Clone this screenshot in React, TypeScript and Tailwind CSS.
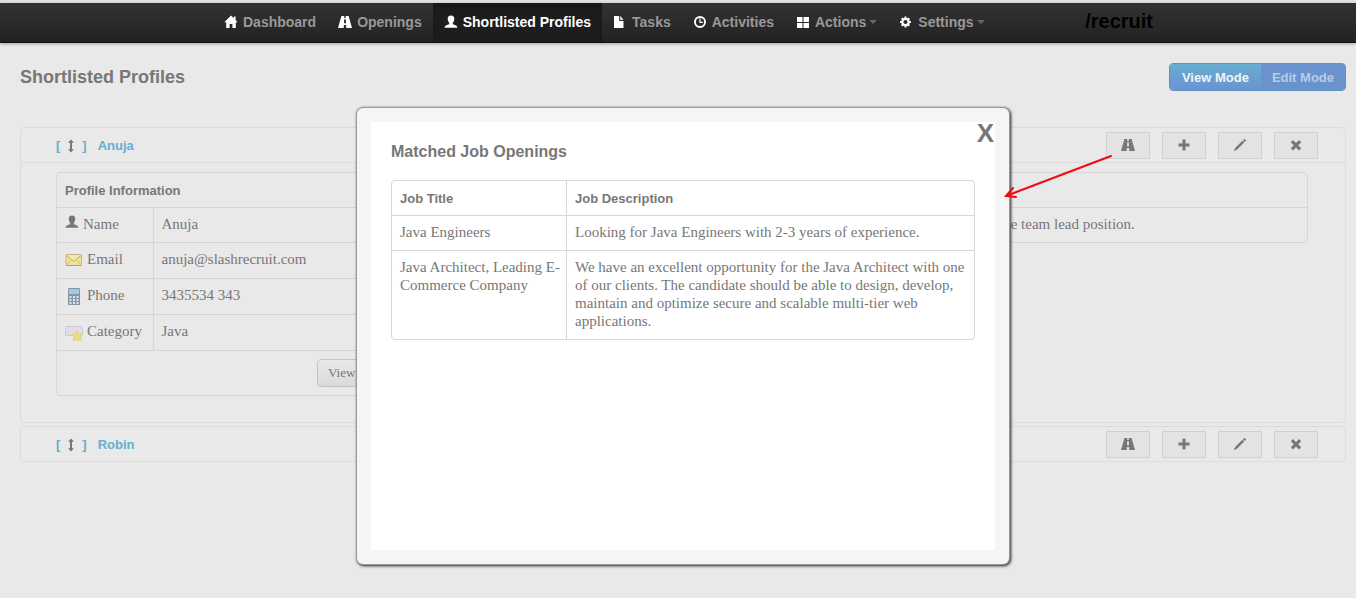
import type { ReactNode } from 'react';

interface IconProps {
  className?: string;
}

function Glyph({ children, className = '' }: IconProps & { children: ReactNode }) {
  return (
    <svg viewBox="0 0 14 14" className={`h-3.5 w-3.5 shrink-0 ${className}`} fill="currentColor" aria-hidden="true">
      {children}
    </svg>
  );
}

const HomeIcon = () => (
  <Glyph><path d="M7 .5 L.3 7.2 H2.2 V13 H5.6 V9 H8.4 V13 H11.8 V7.2 H13.7 L11.6 5.1 V1.6 H9.8 V3.3 Z" /></Glyph>
);
const RoadIcon = () => (
  <Glyph>
    <path fillRule="evenodd" d="M3.4 1 H6.3 L6.2 3 H7.8 L7.7 1 H10.6 L14 13 H8.3 L8.1 10 H5.9 L5.7 13 H0 Z M6.2 4.2 L6 8.2 H8 L7.8 4.2 Z" />
  </Glyph>
);
const UserIcon = () => (
  <Glyph>
    <path d="M7 .6 C9.3 .6 10.4 2 10.3 4 C10.2 6 9.5 7 8.8 7.8 V9 C8.8 9.6 13.4 9.8 13.4 12.8 H.6 C.6 9.8 5.2 9.6 5.2 9 V7.8 C4.5 7 3.8 6 3.7 4 C3.6 2 4.7 .6 7 .6 Z" />
  </Glyph>
);
const FileIcon = () => (
  <Glyph><path d="M1 1 H6.2 V6 H10.5 V13 H1 Z M7.2 1 L10.5 4.8 H7.2 Z" /></Glyph>
);
const ClockIcon = () => (
  <Glyph>
    <path fillRule="evenodd" d="M7 1 A6 6 0 1 1 7 13 A6 6 0 1 1 7 1 Z M7 2.9 A4.1 4.1 0 1 0 7 11.1 A4.1 4.1 0 1 0 7 2.9 Z" />
    <path d="M6.4 3.6 H7.6 V6.8 H10 V8 H6.4 Z" />
  </Glyph>
);
const GridIcon = () => (
  <Glyph><path d="M1 2 H6.5 V7 H1 Z M7.5 2 H13 V7 H7.5 Z M1 8 H6.5 V13 H1 Z M7.5 8 H13 V13 H7.5 Z" /></Glyph>
);
const CogIcon = () => (
  <Glyph>
    <circle cx="6.5" cy="7" r="3.2" fill="none" stroke="currentColor" strokeWidth="2.2" />
    <g stroke="currentColor" strokeWidth="2">
      <path d="M6.5 1.6 V3.4 M6.5 10.6 V12.4 M1.1 7 H2.9 M10.1 7 H11.9 M2.7 3.2 L4 4.5 M9 9.5 L10.3 10.8 M10.3 3.2 L9 4.5 M4 9.5 L2.7 10.8" />
    </g>
  </Glyph>
);
const PlusIcon = () => (
  <Glyph><path d="M5.5 1.5 H8.5 V5.5 H12.5 V8.5 H8.5 V12.5 H5.5 V8.5 H1.5 V5.5 H5.5 Z" /></Glyph>
);
const PencilIcon = () => (
  <Glyph><path d="M11.4 .8 L13.2 2.6 L11.8 4 L10 2.2 Z M9.4 2.8 L11.2 4.6 L4 11.8 L.8 13.2 L2.2 10 Z" /></Glyph>
);
const RemoveIcon = () => (
  <Glyph><path d="M4 2 L7 5 L10 2 L12.2 4.2 L9.2 7.2 L12.2 10.2 L10 12.4 L7 9.4 L4 12.4 L1.8 10.2 L4.8 7.2 L1.8 4.2 Z" /></Glyph>
);
const ResizeIcon = () => (
  <Glyph className="text-[#777777]"><path d="M7 .6 L10 3.8 H8 V10.2 H10 L7 13.4 L4 10.2 H6 V3.8 H4 Z" /></Glyph>
);

const MailIcon = () => (
  <svg viewBox="0 0 18 19" className="h-[19px] w-[18px] shrink-0" aria-hidden="true">
    <rect x="1" y="4.5" width="15.5" height="11" rx="1" fill="#f0e298" stroke="#c8b283" />
    <path d="M1.5 14.5 L7 9.5 M16 14.5 L11 9.5" stroke="#d6c06e" fill="none" />
    <path d="M1.5 5.5 L8.8 11.2 L16 5.5" stroke="#c3b069" fill="#f4ebb4" />
    <path d="M1 15.5 H16.5" stroke="#b79e74" />
  </svg>
);
const PhoneIcon = () => (
  <svg viewBox="0 0 18 19" className="h-[19px] w-[18px] shrink-0" aria-hidden="true">
    <rect x="3" y="2" width="12" height="17" rx="1" fill="#8597a5" />
    <rect x="4" y="3" width="10" height="5" fill="#a3cbe0" />
    <path
      fill="#dfe5e9"
      d="M4.5 10 H6.5 V12 H4.5 Z M8 10 H10 V12 H8 Z M11.5 10 H13.5 V12 H11.5 Z M4.5 13 H6.5 V15 H4.5 Z M8 13 H10 V15 H8 Z M11.5 13 H13.5 V15 H11.5 Z M4.5 16 H6.5 V18 H4.5 Z M8 16 H10 V18 H8 Z M11.5 16 H13.5 V18 H11.5 Z"
    />
  </svg>
);
const CategoryIcon = () => (
  <svg viewBox="0 0 18 19" className="h-[19px] w-[18px] shrink-0" aria-hidden="true">
    <rect x=".5" y="4.5" width="17" height="9" rx="1" fill="#e0dfe5" stroke="#cdc9cf" />
    <path d="M12 8.5 L13.6 11.6 L17.3 12 L15.8 14.6 L16.2 18.4 H8.2 L8.6 14.6 L6.8 12 L10.4 11.6 Z" fill="#ecdc78" stroke="#dccb80" strokeWidth=".6" />
  </svg>
);

const navItems = [
  { label: 'Dashboard', icon: <HomeIcon /> },
  { label: 'Openings', icon: <RoadIcon /> },
  { label: 'Shortlisted Profiles', icon: <UserIcon />, active: true },
  { label: 'Tasks', icon: <FileIcon /> },
  { label: 'Activities', icon: <ClockIcon /> },
  { label: 'Actions', icon: <GridIcon />, menu: true },
  { label: 'Settings', icon: <CogIcon />, menu: true },
];

const profileRows = [
  { label: 'Name', value: 'Anuja', icon: <UserIcon /> },
  { label: 'Email', value: 'anuja@slashrecruit.com', icon: <MailIcon /> },
  { label: 'Phone', value: '3435534 343', icon: <PhoneIcon /> },
  { label: 'Category', value: 'Java', icon: <CategoryIcon /> },
];

const openings = [
  { title: 'Java Engineers', description: 'Looking for Java Engineers with 2-3 years of experience.' },
  {
    title: 'Java Architect, Leading E-Commerce Company',
    description:
      'We have an excellent opportunity for the Java Architect with one of our clients. The candidate should be able to design, develop, maintain and optimize secure and scalable multi-tier web applications.',
  },
];

const actions = [
  { label: 'Matched openings', icon: <RoadIcon /> },
  { label: 'Add', icon: <PlusIcon /> },
  { label: 'Edit', icon: <PencilIcon /> },
  { label: 'Remove', icon: <RemoveIcon /> },
];

function Navbar() {
  return (
    <header className="border-t-[3px] border-[#e2e2e2] font-[Liberation_Sans,Arial,sans-serif]">
      <div className="border-b border-[#111111] bg-linear-to-b from-[#333333] to-[#222222] pl-[10px] shadow-[0_1px_3px_rgba(0,0,0,0.3)]">
        <div className="mx-auto flex h-[39px] max-w-[940px] items-stretch justify-between">
          <nav className="flex text-sm font-bold">
            {navItems.map(item => (
              <a
                key={item.label}
                href="#"
                className={`flex items-center gap-[5px] px-[11px] pb-0.5 whitespace-nowrap ${item.active ? 'bg-[#1d1d1d] text-white shadow-[inset_0_3px_8px_rgba(0,0,0,0.2)]' : 'text-[#999999]'}`}
              >
                <span className="text-white">{item.icon}</span>
                <span>{item.label}</span>
                {item.menu && <span className="-ml-0.5 border-x-4 border-t-4 border-x-transparent border-t-[#666666]" />}
              </a>
            ))}
          </nav>
          <a href="#" className="self-center pb-1 text-xl leading-6 font-bold text-black">/recruit</a>
        </div>
      </div>
    </header>
  );
}

function ProfileBar({ name }: { name: string }) {
  return (
    <div className="flex h-[34px] items-center justify-between pr-[27px] pl-[35px] font-[Liberation_Sans,Arial,sans-serif]">
      <a href="#" className="flex items-center gap-[11px] pt-0.5 text-[13px] font-bold text-[#66afce]">
        <span className="flex items-center gap-1">[ <ResizeIcon /> ]</span>
        {name}
      </a>
      <div className="flex gap-3">
        {actions.map(action => (
          <button
            key={action.label}
            aria-label={action.label}
            className="flex h-[27px] w-11 items-center justify-center border border-[#cfcfcf] bg-[#e3e3e3] text-[#777777]"
          >
            {action.icon}
          </button>
        ))}
      </div>
    </div>
  );
}

function ProfileDetails() {
  return (
    <div className="flex items-start gap-5 border-t border-[#dcdcdc] pt-[9px] pr-[37px] pb-[26px] pl-[35px]">
      <div className="w-[420px] rounded border border-[#d6d6d6]">
        <table className="w-full text-left">
          <thead>
            <tr>
              <th colSpan={2} className="px-2 pt-[9px] pb-[7px] font-[Liberation_Sans,Arial,sans-serif] text-[13px] leading-[18px]">
                Profile Information
              </th>
            </tr>
          </thead>
          <tbody>
            {profileRows.map(row => (
              <tr key={row.label} className="border-t border-[#d6d6d6] align-top">
                <th className="w-24 border-r border-[#d6d6d6] px-2 pt-[7px] pb-[9px] font-normal">
                  <span className="flex items-start gap-1">{row.icon}{row.label}</span>
                </th>
                <td className="px-2 pt-[7px] pb-[9px]">{row.value}</td>
              </tr>
            ))}
          </tbody>
        </table>
        <div className="flex border-t border-[#d6d6d6] py-2 pl-[260px]">
          <button className="h-7 rounded border border-[#c4c4c4] bg-linear-to-b from-[#e9e9e9] to-[#dadada] px-2.5 text-[13px] whitespace-nowrap">
            View
          </button>
        </div>
      </div>
      <table className="flex-1 table-fixed border-separate border-spacing-0 rounded border border-[#d6d6d6] text-left">
        <tbody>
          <tr className="h-[34px]">
            <td className="w-[494px]" />
            <td />
          </tr>
          <tr>
            <td className="border-t border-[#d6d6d6]" />
            <td className="border-t border-[#d6d6d6] px-2 pt-[7px] pb-[9px]">the team lead position.</td>
          </tr>
        </tbody>
      </table>
    </div>
  );
}

function MatchedOpenings() {
  return (
    <div className="absolute inset-0 flex items-start justify-center pt-[108px] pl-[10px]">
      <div
        role="dialog"
        aria-labelledby="matched-title"
        className="relative w-full max-w-[652px] rounded-md bg-[#f5f5f5] p-3.5 shadow-[0_0_0_1px_#999999,1px_1px_3px_1px_#222222]"
      >
        <div className="min-h-[428px] bg-white px-5 pt-5">
          <h3 id="matched-title" className="font-[Liberation_Sans,Arial,sans-serif] text-base leading-5 font-bold">
            Matched Job Openings
          </h3>
          <table className="mt-[18px] w-full table-fixed border-separate border-spacing-0 rounded border border-[#d8d8d8] text-left">
            <thead className="font-[Liberation_Sans,Arial,sans-serif] text-[13px]">
              <tr>
                <th className="w-[175px] border-r border-[#d8d8d8] px-2 pt-[9px] pb-[7px]">Job Title</th>
                <th className="px-2 pt-[9px] pb-[7px]">Job Description</th>
              </tr>
            </thead>
            <tbody>
              {openings.map(job => (
                <tr key={job.title} className="align-top">
                  <td className="border-t border-r border-[#d8d8d8] pt-[7px] pb-[9px] pl-2">{job.title}</td>
                  <td className="border-t border-[#d8d8d8] px-2 pt-[7px] pb-[9px]">{job.description}</td>
                </tr>
              ))}
            </tbody>
          </table>
        </div>
        <button
          aria-label="Close"
          className="absolute top-[11px] right-[15px] font-[Liberation_Sans,Arial,sans-serif] text-[26px] leading-7 font-bold text-[#777777]"
        >
          X
        </button>
        <svg viewBox="0 0 112 48" className="absolute top-11 left-[646px] h-12 w-28" fill="none" stroke="#ee0b12" strokeWidth="2" strokeLinecap="round" aria-hidden="true">
          <path d="M108 4 L3 44 M10 36 L3 44 L13 45" />
        </svg>
      </div>
    </div>
  );
}

export default function App() {
  return (
    <div className="relative min-h-screen bg-[#e9e9e9] font-[Liberation_Serif,Times_New_Roman,serif] text-[15px] leading-[18px] text-[#777777]">
      <Navbar />
      <main className="pt-5 pr-[10px] pl-5">
        <div className="flex items-center justify-between font-[Liberation_Sans,Arial,sans-serif] font-bold">
          <h2 className="text-lg leading-7">Shortlisted Profiles</h2>
          <div className="flex overflow-hidden rounded border border-[#5f92c4] text-[13px] leading-6">
            <button className="bg-linear-to-b from-[#66aed1] to-[#6b93cf] px-3 pt-0.5 text-[#f0f4f8]">View Mode</button>
            <button className="bg-[#6a92cd] px-[11px] pt-0.5 text-[#b9cbe8]">Edit Mode</button>
          </div>
        </div>
        <section className="mt-9 rounded border border-[#dcdcdc]">
          <ProfileBar name="Anuja" />
          <ProfileDetails />
        </section>
        <section className="mt-[3px] rounded border border-[#dcdcdc]">
          <ProfileBar name="Robin" />
        </section>
      </main>
      <MatchedOpenings />
    </div>
  );
}
